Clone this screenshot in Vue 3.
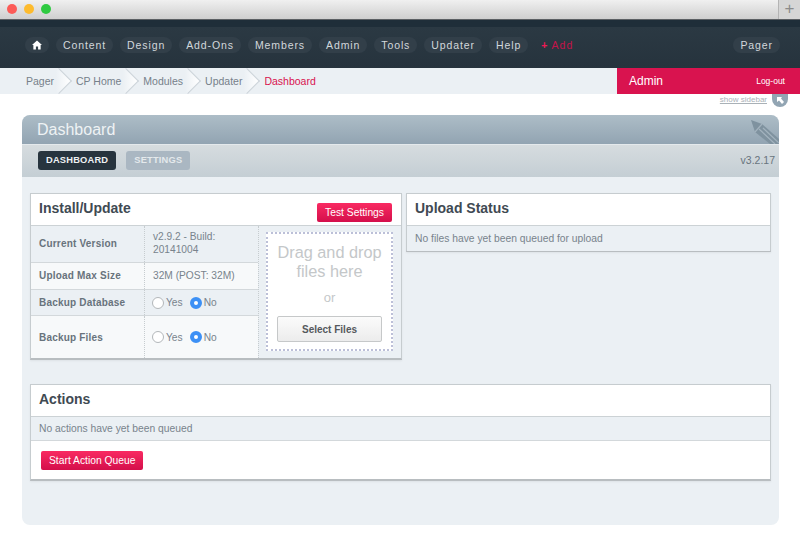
<template>
  <div class="page">
    <div class="titlebar">
      <div class="lights">
        <span class="light red"></span>
        <span class="light yellow"></span>
        <span class="light green"></span>
      </div>
      <div class="new-tab">+</div>
    </div>

    <div class="nav">
      <div class="nav-left">
        <a class="pill home">
          <svg width="11" height="10" viewBox="0 0 11 10">
            <path d="M5.5 0 L11 5 L9.5 5 L9.5 10 L6.7 10 L6.7 6.6 L4.3 6.6 L4.3 10 L1.5 10 L1.5 5 L0 5 Z" fill="#fff" />
          </svg>
        </a>
        <a v-for="item in navItems" :key="item" class="pill">{{ item }}</a>
        <a class="add"><b>+</b> Add</a>
      </div>
      <a class="pill">Pager</a>
    </div>

    <div class="crumbbar">
      <div class="crumbs">
        <span v-for="c in crumbs" :key="c" class="crumb">{{ c }}</span>
        <span class="crumb-current">Dashboard</span>
      </div>
      <div class="user">
        <span class="user-name">Admin</span>
        <span class="logout">Log-out</span>
      </div>
    </div>

    <div class="sidebar-row">
      <span class="show-sidebar">show sidebar</span>
      <span class="sidebar-btn">
        <svg width="7" height="7" viewBox="0 0 7 7">
          <path d="M0 0 L5 0 L4 1.6 L7 5 L5 7 L2 3.6 L0 5 Z" fill="#fff" />
        </svg>
      </span>
    </div>

    <div class="panel">
      <div class="panel-head">
        <h1>Dashboard</h1>
        <svg class="pencil" width="30" height="25" viewBox="0 0 30 25">
          <path d="M2 1 L13 5 L30 20 L30 25 L21 25 L6 13 Z" fill="#7f929f" />
          <path d="M13 5 L6 13" stroke="#a3b3be" stroke-width="1.2" fill="none" />
          <path d="M10 10 L26 25 M14 9 L30 24" stroke="#a3b3be" stroke-width="1.2" fill="none" />
        </svg>
      </div>
      <div class="subnav">
        <div class="tabs">
          <span class="tab active">DASHBOARD</span>
          <span class="tab">SETTINGS</span>
        </div>
        <span class="version">v3.2.17</span>
      </div>

      <div class="content">
        <div class="columns">
          <div class="card install">
            <div class="card-head">
              <h2>Install/Update</h2>
              <button class="red-btn test">Test Settings</button>
            </div>
            <div class="install-body">
              <div class="rows">
                <div class="row shaded r1">
                  <div class="label">Current Version</div>
                  <div class="value">v2.9.2 - Build: 20141004</div>
                </div>
                <div class="row r2">
                  <div class="label">Upload Max Size</div>
                  <div class="value">32M (POST: 32M)</div>
                </div>
                <div class="row shaded r3">
                  <div class="label">Backup Database</div>
                  <div class="value radios">
                    <span class="radio"></span>Yes
                    <span class="radio on"></span>No
                  </div>
                </div>
                <div class="row r4">
                  <div class="label">Backup Files</div>
                  <div class="value radios">
                    <span class="radio"></span>Yes
                    <span class="radio on"></span>No
                  </div>
                </div>
              </div>
              <div class="drop-cell">
                <div class="dropzone">
                  <div class="drop-text">Drag and drop files here</div>
                  <div class="drop-or">or</div>
                  <button class="select-btn">Select Files</button>
                </div>
              </div>
            </div>
          </div>

          <div class="card upload">
            <div class="card-head"><h2>Upload Status</h2></div>
            <div class="note">No files have yet been queued for upload</div>
          </div>
        </div>

        <div class="card actions">
          <div class="card-head"><h2>Actions</h2></div>
          <div class="note">No actions have yet been queued</div>
          <div class="actions-foot">
            <button class="red-btn">Start Action Queue</button>
          </div>
        </div>
      </div>
    </div>
  </div>
</template>

<script setup>
const navItems = ['Content', 'Design', 'Add-Ons', 'Members', 'Admin', 'Tools', 'Updater', 'Help']
const crumbs = ['Pager', 'CP Home', 'Modules', 'Updater']
</script>

<style>
html, body {
  margin: 0;
  background: #fff;
}
</style>

<style scoped>
.page {
  width: 800px;
  height: 548px;
  overflow: hidden;
  font-family: "Liberation Sans", Arial, sans-serif;
  color: #6f7b85;
}

.titlebar {
  height: 19px;
  display: flex;
  justify-content: space-between;
  background: linear-gradient(#f0f0f0, #cfcfcf);
  border-bottom: 1px solid #5c6064;
}
.lights {
  display: flex;
  gap: 7px;
  padding: 4px 0 0 7px;
}
.light {
  width: 10px;
  height: 10px;
  border-radius: 50%;
}
.red { background: #fc5b57; }
.yellow { background: #fdbb2e; }
.green { background: #2fca41; }
.new-tab {
  width: 21px;
  border-left: 1px solid #b4b4b4;
  background: #d6d6d6;
  color: #8b8b8b;
  font-size: 17px;
  line-height: 18px;
  text-align: center;
}

.nav {
  height: 48px;
  box-sizing: border-box;
  padding: 17px 20px 0 25px;
  display: flex;
  justify-content: space-between;
  align-items: flex-start;
  background: linear-gradient(#1f2e39 0, #1f2e39 7px, #2b3943 7px, #26333d 100%);
}
.nav-left {
  display: flex;
  gap: 7px;
}
.pill {
  height: 16px;
  padding: 0 7px;
  border-radius: 8px;
  background: #323f49;
  color: #d3d8dc;
  font-size: 10.5px;
  line-height: 16px;
  letter-spacing: 0.9px;
}
.home {
  width: 10px;
  padding: 0 7px;
  display: flex;
  align-items: center;
  justify-content: center;
}
.add {
  margin-left: 6px;
  color: #c3134a;
  font-size: 10.5px;
  line-height: 17px;
  letter-spacing: 1px;
}
.add b {
  color: #ee1a55;
}

.crumbbar {
  height: 26px;
  display: flex;
  justify-content: space-between;
  background: #ebf0f4;
}
.crumbs {
  display: flex;
  padding-left: 26px;
  overflow: hidden;
  isolation: isolate;
  font-size: 10.5px;
  line-height: 26px;
}
.crumb {
  position: relative;
  margin-right: 22px;
  color: #76808a;
}
.crumb::after {
  content: "";
  position: absolute;
  z-index: -1;
  top: 4px;
  right: -14px;
  width: 18px;
  height: 18px;
  box-sizing: border-box;
  border-top: 1px solid #cdd4da;
  border-right: 1px solid #cdd4da;
  background: linear-gradient(45deg, #ebf0f4 40%, #fff);
  transform: rotate(45deg) scale(1.02);
}
.crumb-current {
  color: #d9134f;
}
.user {
  width: 183px;
  box-sizing: border-box;
  padding: 0 15px 0 12px;
  display: flex;
  justify-content: space-between;
  background: #d9134f;
  color: #fff;
  line-height: 26px;
}
.user-name {
  font-size: 12px;
}
.logout {
  font-size: 8.5px;
}

.sidebar-row {
  height: 21px;
  box-sizing: border-box;
  padding-right: 12px;
  display: flex;
  justify-content: flex-end;
  gap: 5px;
}
.show-sidebar {
  margin-top: 1px;
  color: #a9b1b7;
  font-size: 8px;
  line-height: 10px;
  text-decoration: underline;
}
.sidebar-btn {
  width: 16px;
  height: 13px;
  border-radius: 0 0 8px 8px;
  background: #92a5b3;
  display: flex;
  align-items: center;
  justify-content: center;
}

.panel {
  width: 757px;
  height: 410px;
  margin-left: 22px;
  border-radius: 8px;
  overflow: hidden;
  background: #ebf0f4;
}
.panel-head {
  position: relative;
  height: 29px;
  background: linear-gradient(#adbdc7, #92a4b2);
  border-bottom: 1px solid #e4e9ec;
}
.panel-head h1 {
  margin: 0;
  padding-left: 15px;
  color: #eef2f4;
  font-size: 16px;
  font-weight: 400;
  line-height: 29px;
}
.pencil {
  position: absolute;
  top: 4px;
  right: 0;
}
.subnav {
  height: 32px;
  box-sizing: border-box;
  padding: 6px 4px 0 16px;
  display: flex;
  justify-content: space-between;
  background: linear-gradient(#d6dcdf, #c4ced4);
}
.tabs {
  display: flex;
  gap: 10px;
}
.tab {
  height: 19px;
  padding: 0 8px;
  border-radius: 3px;
  background: #aab7c2;
  color: #e4e9ec;
  font-size: 9.3px;
  font-weight: 700;
  line-height: 19px;
  letter-spacing: 0.2px;
}
.tab.active {
  background: #27343e;
  color: #eef1f3;
}
.version {
  color: #69747d;
  font-size: 10.5px;
  line-height: 19px;
}

.content {
  padding: 16px 8px 0;
}
.columns {
  display: flex;
  align-items: flex-start;
  gap: 4px;
}
.card {
  box-sizing: border-box;
  border: 1px solid #c6cccf;
  border-bottom: 2px solid #b8bdc0;
  background: #fff;
  box-shadow: 0 1px 2px rgba(0, 0, 0, 0.06);
}
.install {
  width: 372px;
  height: 167px;
}
.upload {
  width: 365px;
  height: 59px;
  background: #ebf0f4;
}
.card-head {
  height: 32px;
  box-sizing: border-box;
  padding: 0 9px 3px 8px;
  display: flex;
  align-items: center;
  justify-content: space-between;
  border-bottom: 1px solid #ccd2d5;
  background: #fff;
}
.card-head h2 {
  margin: 0;
  color: #3f4a53;
  font-size: 14px;
  font-weight: 700;
}
.red-btn {
  height: 19px;
  padding: 0 8px;
  border: 0;
  border-radius: 2px;
  background: linear-gradient(#f92a62, #d40f4b);
  color: #fff;
  font-family: inherit;
  font-size: 10.3px;
  line-height: 19px;
}
.test {
  align-self: flex-start;
  margin-top: 9px;
}
.install-body {
  display: flex;
  height: 132px;
}
.rows {
  width: 227px;
  flex: none;
}
.row {
  display: flex;
  box-sizing: border-box;
  align-items: center;
  background: #f7f9fa;
  border-bottom: 1px solid #d3d8db;
  font-size: 10.2px;
}
.row.shaded {
  background: #ebf0f4;
}
.r1 { height: 37px; }
.r2 { height: 27px; }
.r3 { height: 26px; }
.r4 { height: 42px; border-bottom: 0; }
.r1 .label, .r2 .label { padding-bottom: 2px; }
.r1 .value, .r2 .value { padding-bottom: 2px; }
.label {
  width: 114px;
  align-self: stretch;
  box-sizing: border-box;
  flex: none;
  padding-left: 8px;
  display: flex;
  align-items: center;
  border-right: 1px dotted #c6cccf;
  color: #68737c;
  font-size: 10px;
  font-weight: 700;
  letter-spacing: 0.2px;
}
.value {
  padding-left: 8px;
  color: #78838c;
  line-height: 13px;
}
.radios {
  padding-left: 7px;
  display: flex;
  align-items: center;
  gap: 2px;
}
.radio {
  width: 12px;
  height: 12px;
  box-sizing: border-box;
  border: 1px solid #b3b7ba;
  border-radius: 50%;
  background: #fff;
}
.radio.on {
  margin-left: 5px;
  border: 4px solid #3c90f5;
}
.drop-cell {
  flex: 1;
  padding: 6px 8px 6px 7px;
  box-sizing: border-box;
  background: #ebf0f4;
  border-left: 1px dotted #c6cccf;
}
.dropzone {
  height: 119px;
  box-sizing: border-box;
  padding: 9px 9px 0;
  border: 2px dotted #bcc0d8;
  background: #fff;
  text-align: center;
}
.drop-text {
  color: #c4c7c9;
  font-size: 16.3px;
  line-height: 19px;
}
.drop-or {
  margin-top: 9px;
  color: #c4c7c9;
  font-size: 13px;
  line-height: 16px;
}
.select-btn {
  width: 105px;
  height: 26px;
  margin-top: 10px;
  border: 1px solid #c6c8c9;
  border-radius: 2px;
  background: linear-gradient(#fbfbfb, #ececec);
  color: #55595d;
  font-family: inherit;
  font-size: 10px;
  font-weight: 700;
}
.note {
  height: 25px;
  box-sizing: border-box;
  padding-left: 8px;
  background: #ebf0f4;
  color: #78838c;
  font-size: 10.3px;
  line-height: 25px;
}
.actions {
  width: 741px;
  height: 97px;
  margin-top: 24px;
}
.actions .note {
  height: 24px;
  line-height: 23px;
  border-bottom: 1px solid #d3d8db;
}
.actions-foot {
  padding: 9px 10px;
}
</style>
